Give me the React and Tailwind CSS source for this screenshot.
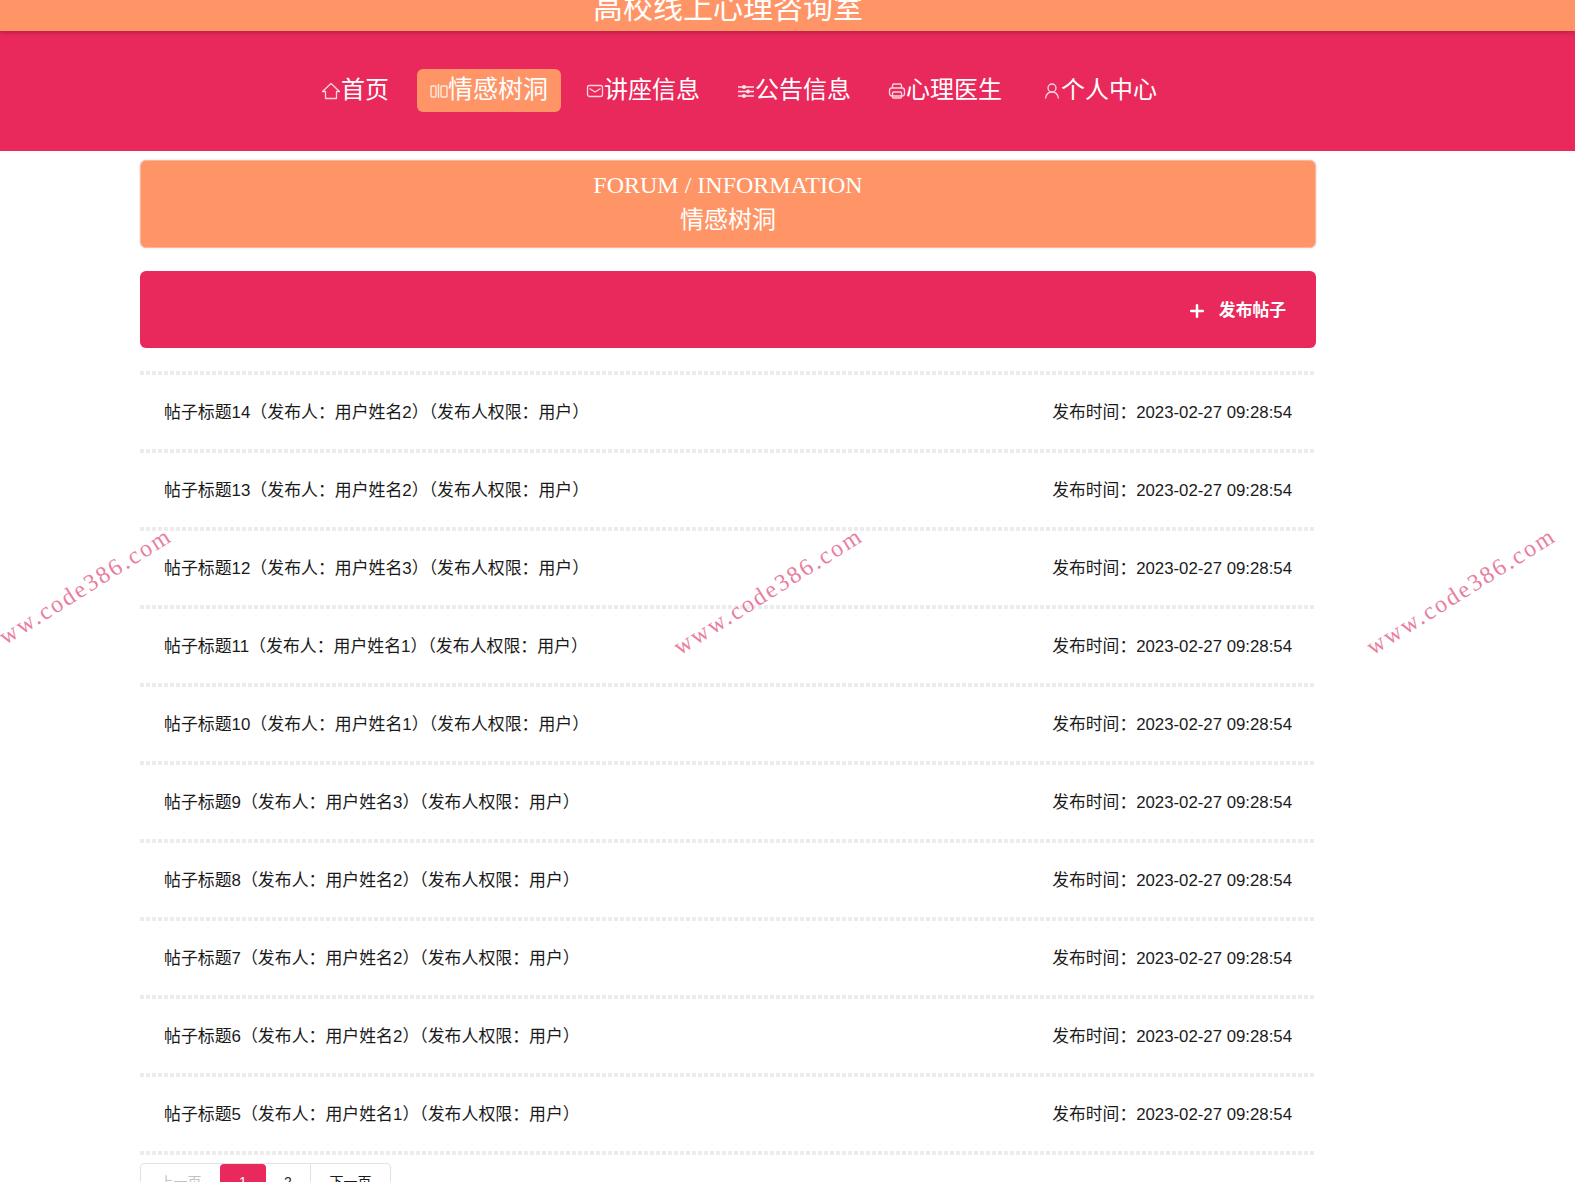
import React from 'react';
import { Plus } from 'lucide-react';

const sans = { fontFamily: '"Liberation Sans", "Noto Sans CJK SC", sans-serif' };

const posts = [
    ['帖子标题14', '用户姓名2'],
    ['帖子标题13', '用户姓名2'],
    ['帖子标题12', '用户姓名3'],
    ['帖子标题11', '用户姓名1'],
    ['帖子标题10', '用户姓名1'],
    ['帖子标题9', '用户姓名3'],
    ['帖子标题8', '用户姓名2'],
    ['帖子标题7', '用户姓名2'],
    ['帖子标题6', '用户姓名2'],
    ['帖子标题5', '用户姓名1'],
];

function HomeIcon() {
    return (
        <svg viewBox="0 0 20 20" className="w-5 h-5 shrink-0 text-[#fbd5df]" fill="none" stroke="currentColor" strokeWidth="1.3">
            <path d="M1.500 10.500 10 2.500l8.500 8H15.500v7h-11v-7z" strokeLinejoin="round" />
        </svg>
    );
}

function ColumnsIcon() {
    return (
        <svg viewBox="0 0 18 18" className="w-[18px] h-[18px] shrink-0 text-[#ffeadf]" fill="none" stroke="currentColor" strokeWidth="1.4">
            <rect x="1" y="4" width="5" height="11" rx="1" />
            <rect x="11" y="4" width="6" height="11" rx="1" />
            <path d="M8.500 2v14" />
        </svg>
    );
}

function MailIcon() {
    return (
        <svg viewBox="0 0 18 18" className="w-[18px] h-[18px] shrink-0 text-[#fbd5df]" fill="none" stroke="currentColor" strokeWidth="1.3">
            <rect x="1.500" y="3.500" width="15" height="11" rx="2" />
            <path d="M3.500 6.500 9 10l5.500-3.500" />
        </svg>
    );
}

function SlidersIcon() {
    return (
        <svg viewBox="0 0 18 18" className="w-[18px] h-[18px] shrink-0 text-[#fde4ea]" fill="currentColor" stroke="currentColor" strokeWidth="1.4">
            <path d="M1 5h16M1 9.500h16M1 14h16" />
            <circle cx="7" cy="5" r="1.300" />
            <circle cx="11" cy="9.500" r="1.300" />
            <circle cx="7" cy="14" r="1.300" />
        </svg>
    );
}

function PrinterIcon() {
    return (
        <svg viewBox="0 0 18 18" className="w-[18px] h-[18px] shrink-0 text-[#fbd5df]" fill="none" stroke="currentColor" strokeWidth="1.3">
            <path d="M4.500 6V3.500a1.500 1.500 0 0 1 1.500-1.500h6a1.500 1.500 0 0 1 1.500 1.500V6" />
            <rect x="1.500" y="6" width="15" height="8" rx="2.500" />
            <rect x="4.500" y="10" width="9" height="6" rx="1" />
        </svg>
    );
}

function UserIcon() {
    return (
        <svg viewBox="0 0 18 18" className="w-[18px] h-[18px] shrink-0 text-[#fbd5df]" fill="none" stroke="currentColor" strokeWidth="1.3">
            <circle cx="9" cy="6" r="4" />
            <path d="M2.500 16.500c.5-3.800 3-6.500 6.500-6.500s6 2.700 6.500 6.500" />
        </svg>
    );
}

function NavItem({ icon, label, active, className }) {
    return (
        <div className={`flex items-center h-[43px] rounded-md ${active ? 'bg-[#ff9566] text-[25px] px-[13px]' : 'text-[24px] px-3'} ${className || ''}`}>
            {icon}
            <span className="leading-none -mt-[2px]">{label}</span>
        </div>
    );
}

function Watermark({ className }) {
    return (
        <div
            className={`absolute top-[579px] -rotate-[32deg] text-[24px] tracking-[2.200px] leading-none whitespace-nowrap text-[#e87fa0] pointer-events-none ${className}`}
            style={{ fontFamily: '"Liberation Serif", serif' }}
        >
            www.code386.com
        </div>
    );
}

function Divider() {
    return <div className="h-1 bg-[repeating-linear-gradient(90deg,#ececec_0,#ececec_4px,#ffffff_4px,#ffffff_6px)]" />;
}

export default function App() {
    return (
        <div className="relative h-[1182px] overflow-hidden bg-white text-[#1a1a1a]" style={sans}>
            <header className="relative z-10 h-[31px] overflow-hidden bg-[#ff9566] shadow-[0_2px_4px_rgba(0,0,0,0.2)]">
                <div className="w-[1176px] ml-[140px] -mt-[12px] text-center text-[30px] leading-[40px] text-white">高校线上心理咨询室</div>
            </header>

            <nav className="h-[120px] bg-[#e9285b] text-white pt-[38px] pl-[309px] flex items-start">
                <NavItem icon={<HomeIcon />} label="首页" />
                <NavItem active icon={<ColumnsIcon />} label="情感树洞" className="ml-[16px]" />
                <NavItem icon={<MailIcon />} label="讲座信息" className="ml-[13px]" />
                <NavItem icon={<SlidersIcon />} label="公告信息" className="ml-[13px]" />
                <NavItem icon={<PrinterIcon />} label="心理医生" className="ml-[13px]" />
                <NavItem icon={<UserIcon />} label="个人中心" className="ml-[17px]" />
            </nav>

            <main className="w-[1176px] ml-[140px] pt-[9px]">
                <div className="h-[88px] rounded-md bg-[#ff9566] border border-[#f7b697] text-white text-center shadow-[0_0_3px_rgba(0,0,0,0.15)] pt-[8px]">
                    <div className="text-[24px] leading-[32px]" style={{ fontFamily: '"Liberation Serif", "Noto Sans CJK SC", serif' }}>FORUM / INFORMATION</div>
                    <div className="text-[24px] leading-[34px] mt-[2px]">情感树洞</div>
                </div>

                <div className="mt-[23px] h-[77px] rounded-md bg-[#e9285b] text-white flex items-center justify-end pr-[30px] pt-[2px]">
                    <Plus className="w-[20px] h-[20px]" strokeWidth={3} />
                    <span className="ml-[12px] text-[16.800px] font-bold">发布帖子</span>
                </div>

                <div className="mt-[23px]">
                    <Divider />
                </div>

                {posts.map(([title, author]) => (
                    <div key={title}>
                        <div className="h-[74px] pt-[2px] flex items-center justify-between px-6">
                            <span className="text-[16.900px]">{title}（发布人：{author}）（发布人权限：用户）</span>
                            <span className="text-[16.800px]">发布时间：2023-02-27 09:28:54</span>
                        </div>
                        <Divider />
                    </div>
                ))}

                <div className="mt-[8px] inline-flex h-[40px] border border-[#e2e2e2] rounded-sm text-[14px] text-center">
                    <div className="w-[79px] leading-[36px] text-[#c2c2c2]">上一页</div>
                    <div className="w-[46px] leading-[36px] bg-[#e9285b] text-white rounded-t-sm">1</div>
                    <div className="w-[45px] leading-[36px] border-r border-[#e2e2e2]">2</div>
                    <div className="w-[79px] leading-[36px]">下一页</div>
                </div>
            </main>

            <Watermark className="-left-[32px]" />
            <Watermark className="left-[659px]" />
            <Watermark className="left-[1352px]" />
        </div>
    );
}
